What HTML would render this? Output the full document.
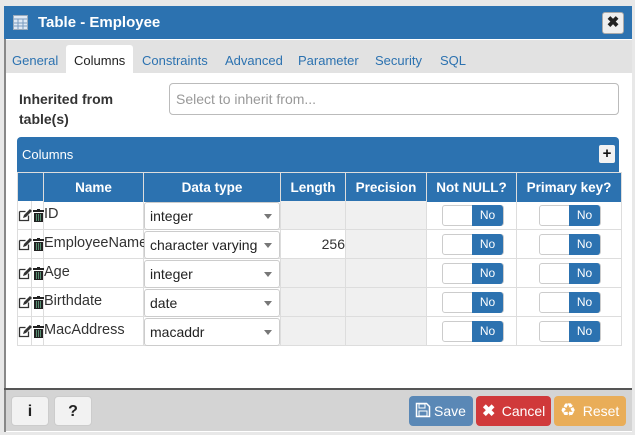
<!DOCTYPE html><html><head><style>
*{box-sizing:border-box;margin:0;padding:0}
body{width:635px;height:435px;background:#e8e8e8;font-family:"Liberation Sans",sans-serif;position:relative;overflow:hidden}
.a{position:absolute}
#dlg{left:4px;top:6px;width:628px;height:426px;background:#fff;border-left:2px solid #888}
.title{left:4px;top:6px;width:628px;height:33px;background:#2c72b0;color:#fff;font-weight:bold;font-size:15px;line-height:33px;padding-left:34px}
.tabs{left:6px;top:40px;width:626px;height:33px;background:#e2e2e2}
.tab{top:48px;font-size:13px;color:#2c72b0;line-height:26px}
.hd{background:#2c72b0;color:#fff;font-weight:bold;font-size:13.5px;text-align:center;line-height:29px;border-right:1px solid #ddd}
.c{border-right:1px solid #ddd;border-bottom:1px solid #ddd;height:29px}
.sel{border:1px solid #ccc;border-radius:3px;background:#fff;font-size:14px;color:#222;line-height:27px;padding-left:5px}
.sel:after{content:"";position:absolute;right:7px;top:11px;border:4px solid transparent;border-top:5px solid #777}
.tg{width:62px;height:21px;border:1px solid #ccc;border-radius:3px;background:#fff}
.tg span{position:absolute;right:0;top:-1px;width:31px;height:21px;background:#2c72b0;color:#fff;font-size:12px;text-align:center;line-height:21px;border-radius:0 3px 3px 0}
.btn{top:396px;height:30px;border-radius:4px;font-size:14px;line-height:30px;color:#fff;text-align:center}
</style></head><body>
<div id="dlg" class="a"></div>
<div class="a title">Table - Employee</div>
<svg class="a" style="left:13px;top:15px" width="15" height="15"><rect x="0.5" y="0.5" width="14" height="14" fill="#dfe9f5" stroke="#9ab"/><path d="M1 4h13M1 8h13M1 11h13M5 4v10M10 4v10" stroke="#7a9cc0"/></svg>
<div class="a" style="left:602px;top:12px;width:22px;height:22px;background:#eee;border:1px solid #aaa;border-radius:3px;font-weight:bold;font-size:15px;text-align:center;line-height:19px;color:#222">✖</div>
<div class="a tabs"></div>
<div class="a" style="left:66px;top:45px;width:67px;height:28px;background:#fff;border-radius:3px 3px 0 0"></div>
<div class="a tab" style="left:12px">General</div>
<div class="a tab" style="left:74px;color:#222">Columns</div>
<div class="a tab" style="left:142px">Constraints</div>
<div class="a tab" style="left:225px">Advanced</div>
<div class="a tab" style="left:298px">Parameter</div>
<div class="a tab" style="left:375px">Security</div>
<div class="a tab" style="left:440px">SQL</div>
<div class="a" style="left:19px;top:89px;font-weight:bold;font-size:14px;line-height:20px;color:#333">Inherited from<br>table(s)</div>
<div class="a" style="left:169px;top:83px;width:450px;height:32px;border:1px solid #bbb;border-radius:4px;font-size:14px;color:#999;line-height:30px;padding-left:6px">Select to inherit from...</div>
<div class="a" style="left:17px;top:137px;width:602px;height:35px;background:#2c72b0;border-radius:4px 4px 0 0;color:#fff;font-size:13px;line-height:36px;padding-left:5px">Columns</div>
<div class="a" style="left:599px;top:145px;width:16px;height:18px;background:#f2f2f2;border-radius:2px;font-weight:bold;text-align:center;line-height:18px;font-size:15px;color:#111">+</div>
<div class="a" style="left:17px;top:172px;width:605px;height:174px;border-left:1px solid #ddd;border-top:1px solid #ddd"></div>
<div class="a hd" style="left:17px;top:172px;width:27px;height:29px;border-left:1px solid #ddd;border-top:1px solid #ddd"></div>
<div class="a hd" style="left:44px;top:172px;width:100px;border-top:1px solid #ddd">Name</div>
<div class="a hd" style="left:144px;top:172px;width:137px;border-top:1px solid #ddd">Data type</div>
<div class="a hd" style="left:281px;top:172px;width:65px;border-top:1px solid #ddd">Length</div>
<div class="a hd" style="left:346px;top:172px;width:81px;border-top:1px solid #ddd">Precision</div>
<div class="a hd" style="left:427px;top:172px;width:90px;border-top:1px solid #ddd">Not NULL?</div>
<div class="a hd" style="left:517px;top:172px;width:105px;border-top:1px solid #ddd">Primary key?</div>
<div id="rows"></div>
<script>
var r=[["ID","integer",""],["EmployeeName","character varying","256"],["Age","integer",""],["Birthdate","date",""],["MacAddress","macaddr",""]],h="";
r.forEach(function(x,i){var y=201+i*29;
h+='<div class="a c" style="left:17px;top:'+y+'px;width:15px"></div><div class="a c" style="left:32px;top:'+y+'px;width:12px"></div>';
h+='<svg class="a" style="left:18px;top:'+(y+8)+'px" width="14" height="13"><path d="M1.5 2.5h6M1.5 2.5v9h9v-5" fill="none" stroke="#333" stroke-width="1.3"/><path d="M5 9l1-3 6-6 2 2-6 6z" fill="#333"/></svg>';
h+='<svg class="a" style="left:33px;top:'+(y+8)+'px" width="11" height="13"><rect x="0" y="1" width="11" height="2" fill="#222"/><rect x="4" y="0" width="3" height="2" fill="#222"/><path d="M1 4h9v9H1z" fill="#222"/><path d="M3.5 5v7M5.5 5v7M7.5 5v7" stroke="#6a8" stroke-width="0.8"/></svg>';
h+='<div class="a c" style="left:44px;top:'+y+'px;width:100px;font-size:14.5px;color:#333;line-height:27px">'+x[0]+'</div>';
h+='<div class="a c" style="left:144px;top:'+y+'px;width:137px"></div><div class="a sel" style="left:144px;top:'+(y+1)+'px;width:136px;height:28px">'+x[1]+'</div>';
h+='<div class="a c" style="left:281px;top:'+y+'px;width:65px;background:'+(x[2]?'#fff':'#f0f0f0')+';font-size:14px;text-align:right;line-height:29px;color:#333">'+x[2]+'</div>';
h+='<div class="a c" style="left:346px;top:'+y+'px;width:81px;background:#f0f0f0"></div>';
h+='<div class="a c" style="left:427px;top:'+y+'px;width:90px"></div><div class="a tg" style="left:442px;top:'+(y+4)+'px"><span>No</span></div>';
h+='<div class="a c" style="left:517px;top:'+y+'px;width:105px"></div><div class="a tg" style="left:539px;top:'+(y+4)+'px"><span>No</span></div>';});
document.getElementById('rows').innerHTML=h;
</script>
<div class="a" style="left:4px;top:388px;width:628px;height:2px;background:#555"></div>
<div class="a" style="left:4px;top:390px;width:628px;height:41px;background:#d4d4d4;border-left:2px solid #888"></div>
<div class="a btn" style="left:11px;width:38px;background:#f2f2f2;color:#222;font-weight:bold;font-size:16px;border:1px solid #ccc">i</div>
<div class="a btn" style="left:54px;width:38px;background:#f2f2f2;color:#222;font-weight:bold;font-size:16px;border:1px solid #ccc">?</div>
<div class="a btn" style="left:409px;width:64px;background:#5a88b6;padding-left:18px">Save</div>
<svg class="a" style="left:415px;top:402px" width="16" height="16"><path d="M1.5 1.5h10l3 3v10h-13z" fill="none" stroke="#fff" stroke-width="1.5"/><rect x="4" y="2" width="6" height="4" fill="none" stroke="#fff"/><rect x="4" y="9" width="8" height="5" fill="none" stroke="#fff"/></svg>
<div class="a btn" style="left:476px;width:75px;background:#d0393a;padding-left:20px">Cancel</div>
<div class="a" style="left:482px;top:402px;color:#fff;font-size:16px;font-weight:bold;line-height:20px">✖</div>
<div class="a btn" style="left:554px;width:72px;background:#e9ad58;padding-left:22px">Reset</div>
<div class="a" style="left:560px;top:400px;color:#fff;font-size:18px;line-height:20px">♻</div>
</body></html>
